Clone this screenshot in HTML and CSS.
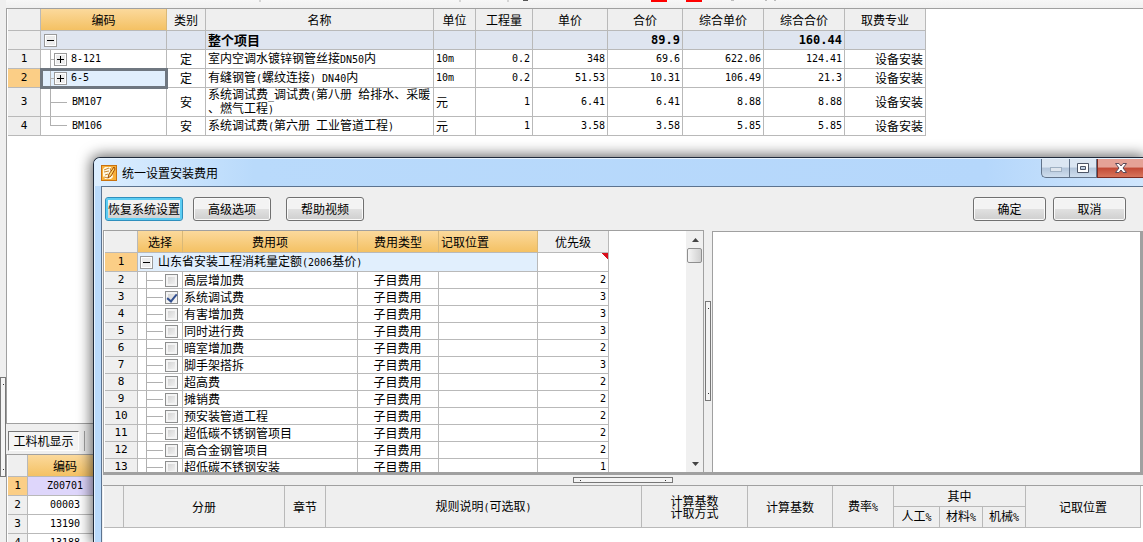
FILE: index.html
```html
<!DOCTYPE html>
<html lang="zh-CN">
<head>
<meta charset="utf-8">
<title>统一设置安装费用</title>
<link rel="stylesheet" href="styles.css">
</head>
<body>
<main class="app">
  <aside class="rail"><span class="grip grip-v"></span></aside>
  <div class="workspace">
    <div class="toolbar">
      <svg class="toolbar-marks" width="830" height="8" aria-hidden="true">
        <path d="M254 0v2M454 0v2M502 0v2" stroke="#b4b4b4"/>
        <rect x="517" y="0" width="5" height="1" fill="#555"/>
        <rect x="645" y="0" width="16" height="2" fill="#f00"/>
        <rect x="680" y="0" width="16" height="2" fill="#f00"/>
        <rect x="725" y="0" width="3" height="1" fill="#bbb"/>
        <rect x="759" y="0" width="2" height="1" fill="#bbb"/>
        <rect x="768" y="0" width="2" height="1" fill="#bbb"/>
      </svg>
    </div>
    <section class="panel budget">
      <table class="grid budget-grid">
        <colgroup><col class="w33"><col class="w126"><col class="w39"><col class="w228"><col class="w42"><col class="w57"><col class="w75"><col class="w75"><col class="w81"><col class="w81"><col class="w81"></colgroup>
        <thead>
          <tr><th></th><th class="hot">编码</th><th>类别</th><th>名称</th><th>单位</th><th>工程量</th><th>单价</th><th>合价</th><th>综合单价</th><th>综合合价</th><th>取费专业</th></tr>
        </thead>
        <tbody>
          <tr class="total"><th></th><td class="tree"><div class="node root"><button class="toggle" aria-label="折叠"></button></div></td><td></td><td>整个项目</td><td></td><td></td><td></td><td class="num">89.9</td><td></td><td class="num">160.44</td><td></td></tr>
          <tr><th>1</th><td class="tree"><div class="node"><i class="stem"></i><button class="toggle plus" aria-label="展开"></button><span class="en">8-121</span></div></td><td class="mid">定</td><td>室内空调水镀锌钢管丝接<span class="en">DN50</span>内</td><td class="en">10m</td><td class="num">0.2</td><td class="num">348</td><td class="num">69.6</td><td class="num">622.06</td><td class="num">124.41</td><td class="end">设备安装</td></tr>
          <tr><th class="hot-row">2</th><td class="tree current"><div class="node"><i class="stem"></i><button class="toggle plus" aria-label="展开"></button><span class="en">6-5</span></div></td><td class="mid">定</td><td>有缝钢管<span class="en">(</span>螺纹连接<span class="en">) DN40</span>内</td><td class="en">10m</td><td class="num">0.2</td><td class="num">51.53</td><td class="num">10.31</td><td class="num">106.49</td><td class="num">21.3</td><td class="end">设备安装</td></tr>
          <tr class="tall"><th>3</th><td class="tree"><div class="node"><i class="stem long"></i><span class="en">BM107</span></div></td><td class="mid">安</td><td class="wrap">系统调试费<span class="en">_</span>调试费<span class="en">(</span>第八册<span class="en"> </span>给排水、采暖<br>、燃气工程<span class="en">)</span></td><td>元</td><td class="num">1</td><td class="num">6.41</td><td class="num">6.41</td><td class="num">8.88</td><td class="num">8.88</td><td class="end">设备安装</td></tr>
          <tr><th>4</th><td class="tree"><div class="node"><i class="stem long last"></i><span class="en">BM106</span></div></td><td class="mid">安</td><td>系统调试费<span class="en">(</span>第六册<span class="en"> </span>工业管道工程<span class="en">)</span></td><td>元</td><td class="num">1</td><td class="num">3.58</td><td class="num">3.58</td><td class="num">5.85</td><td class="num">5.85</td><td class="end">设备安装</td></tr>
        </tbody>
      </table>
    </section>
    <div class="tabs"><button class="tab">工料机显示</button><span class="tab-rule"></span></div>
    <section class="panel resources">
      <table class="grid resource-grid">
        <colgroup><col class="w20"><col class="w75"></colgroup>
        <thead><tr><th></th><th class="hot">编码</th></tr></thead>
        <tbody>
          <tr><th class="hot-row">1</th><td class="mid en picked">Z00701</td></tr>
          <tr><th>2</th><td class="mid en">00003</td></tr>
          <tr><th>3</th><td class="mid en">13190</td></tr>
          <tr><th>4</th><td class="mid en">13188</td></tr>
        </tbody>
      </table>
    </section>
  </div>
</main>

<div class="dialog" role="dialog" aria-labelledby="dialog-title">
  <header class="titlebar">
    <svg class="app-icon" width="16" height="16" viewBox="0 0 16 16" aria-hidden="true">
      <rect x="0.5" y="0.5" width="15" height="15" fill="#f8b03a" stroke="#c9720f"/>
      <path d="M2 4l2-2h6l2 10-2 2H4l-2-3z" fill="#fff8e0"/>
      <path d="M3 5l5-2M3 7l5-1M4 10l3-1M3 12l4 1M9 3l1 3" stroke="#c98a35" fill="none"/>
      <path d="M13 2l-5 7-1 4 3-2 4-7z" fill="#ffd76a" stroke="#a04c05"/>
    </svg>
    <h1 class="dialog-title" id="dialog-title">统一设置安装费用</h1>
    <div class="window-buttons">
      <button class="win min" aria-label="最小化"><svg width="14" height="12"><rect x="1.5" y="5.5" width="11" height="4" fill="#dfe6ee" stroke="#9fb0c2"/></svg></button>
      <button class="win max" aria-label="最大化"><svg width="14" height="12"><path d="M1.500 1.500h11v9h-11zM4.500 4.500h5v3h-5z" fill="#fff" fill-rule="evenodd" stroke="#4c5566"/></svg></button>
      <button class="win close" aria-label="关闭"><svg width="14" height="12"><path d="M1.500 1.500h3.500l2 2.500 2-2.500h3.500l-3.500 4.500 3.500 4.500h-3.500l-2-2.500-2 2.500h-3.500l3.500-4.500z" fill="#fff" stroke="#5b4a58"/></svg></button>
    </div>
  </header>
  <div class="client">
    <div class="actions">
      <button class="btn focus">恢复系统设置</button>
      <button class="btn">高级选项</button>
      <button class="btn help">帮助视频</button>
      <button class="btn small ok">确定</button>
      <button class="btn small">取消</button>
    </div>
    <div class="split">
      <section class="fee-panel">
        <div class="fee-view">
          <table class="grid fee-grid">
            <colgroup><col class="w33"><col class="w45"><col class="w175"><col class="w81"><col class="w99"><col class="w71"></colgroup>
            <thead><tr><th></th><th class="hot">选择</th><th class="hot">费用项</th><th class="hot">费用类型</th><th class="hot start">记取位置</th><th>优先级</th></tr></thead>
            <tbody>
              <tr class="group"><th class="hot-row">1</th><td class="tree" colspan="4"><div class="node"><button class="toggle flat" aria-label="折叠"></button><span>山东省安装工程消耗量定额<span class="en">(2006</span>基价<span class="en">)</span></span></div></td><td class="flagged"></td></tr>
              <tr><th>2</th><td class="tree"><div class="node"><i class="stem"></i><input type="checkbox" id="f2"></div></td><td><label for="f2">高层增加费</label></td><td class="mid">子目费用</td><td></td><td class="num">2</td></tr>
              <tr><th>3</th><td class="tree"><div class="node"><i class="stem"></i><input type="checkbox" id="f3" checked></div></td><td><label for="f3">系统调试费</label></td><td class="mid">子目费用</td><td></td><td class="num">3</td></tr>
              <tr><th>4</th><td class="tree"><div class="node"><i class="stem"></i><input type="checkbox" id="f4"></div></td><td><label for="f4">有害增加费</label></td><td class="mid">子目费用</td><td></td><td class="num">3</td></tr>
              <tr><th>5</th><td class="tree"><div class="node"><i class="stem"></i><input type="checkbox" id="f5"></div></td><td><label for="f5">同时进行费</label></td><td class="mid">子目费用</td><td></td><td class="num">3</td></tr>
              <tr><th>6</th><td class="tree"><div class="node"><i class="stem"></i><input type="checkbox" id="f6"></div></td><td><label for="f6">暗室增加费</label></td><td class="mid">子目费用</td><td></td><td class="num">2</td></tr>
              <tr><th>7</th><td class="tree"><div class="node"><i class="stem"></i><input type="checkbox" id="f7"></div></td><td><label for="f7">脚手架搭拆</label></td><td class="mid">子目费用</td><td></td><td class="num">3</td></tr>
              <tr><th>8</th><td class="tree"><div class="node"><i class="stem"></i><input type="checkbox" id="f8"></div></td><td><label for="f8">超高费</label></td><td class="mid">子目费用</td><td></td><td class="num">2</td></tr>
              <tr><th>9</th><td class="tree"><div class="node"><i class="stem"></i><input type="checkbox" id="f9"></div></td><td><label for="f9">摊销费</label></td><td class="mid">子目费用</td><td></td><td class="num">2</td></tr>
              <tr><th>10</th><td class="tree"><div class="node"><i class="stem"></i><input type="checkbox" id="f10"></div></td><td><label for="f10">预安装管道工程</label></td><td class="mid">子目费用</td><td></td><td class="num">2</td></tr>
              <tr><th>11</th><td class="tree"><div class="node"><i class="stem"></i><input type="checkbox" id="f11"></div></td><td><label for="f11">超低碳不锈钢管项目</label></td><td class="mid">子目费用</td><td></td><td class="num">2</td></tr>
              <tr><th>12</th><td class="tree"><div class="node"><i class="stem"></i><input type="checkbox" id="f12"></div></td><td><label for="f12">高合金钢管项目</label></td><td class="mid">子目费用</td><td></td><td class="num">2</td></tr>
              <tr><th>13</th><td class="tree"><div class="node"><i class="stem"></i><input type="checkbox" id="f13"></div></td><td><label for="f13">超低碳不锈钢安装</label></td><td class="mid">子目费用</td><td></td><td class="num">1</td></tr>
            </tbody>
          </table>
        </div>
        <div class="scrollbar" aria-hidden="true">
          <svg width="16" height="16"><path d="M5 10h7l-3.500-4z" fill="#444"/></svg>
          <span class="thumb"></span>
          <svg class="down" width="16" height="16"><path d="M5 6h7l-3.500 4z" fill="#444"/></svg>
        </div>
      </section>
      <div class="gutter-v"><span class="grip grip-v"></span></div>
      <section class="detail-panel"></section>
    </div>
    <div class="gutter-h"><span class="grip grip-h"></span></div>
    <section class="rules">
      <table class="grid rule-grid">
        <colgroup><col class="w20"><col class="w161"><col class="w41"><col class="w316"><col class="w106"><col class="w85"><col class="w61"><col class="w46"><col class="w43"><col class="w43"><col></colgroup>
        <thead>
          <tr><th rowspan="2"></th><th rowspan="2">分册</th><th rowspan="2">章节</th><th rowspan="2">规则说明<span class="en">(</span>可选取<span class="en">)</span></th><th rowspan="2" class="wrap">计算基数<br>计取方式</th><th rowspan="2">计算基数</th><th rowspan="2">费率<span class="en">%</span></th><th colspan="3">其中</th><th rowspan="2">记取位置</th></tr>
          <tr><th>人工<span class="en">%</span></th><th>材料<span class="en">%</span></th><th>机械<span class="en">%</span></th></tr>
        </thead>
      </table>
    </section>
  </div>
</div>
</body>
</html>
```

FILE: styles.css
```css
* { box-sizing: border-box; }

html, body { height: 100%; }

body {
  margin: 0;
  overflow: hidden;
  position: relative;
  background: #efefef;
  color: #000;
  font: 12px/16px "Noto Sans CJK SC", sans-serif;
}

button, input { font: inherit; color: inherit; margin: 0; padding: 0; }

.en, .num, tbody th { font-family: "DejaVu Sans Mono", "Noto Sans CJK SC", monospace; font-size: 10px; }
tbody th { font-size: 11px; }

/* Main window */
.app { display: flex; height: 100%; }

.rail { width: 6px; flex: none; display: flex; justify-content: center; align-items: flex-start; padding-top: 377px; }

.grip { display: flex; justify-content: space-between; border: 1px solid #777; background: #f4f4f4; }
.grip::before, .grip::after { content: ""; width: 1px; height: 1px; background: #333; }
.grip-v { width: 6px; height: 100px; flex: none; flex-direction: column; align-items: center; padding: 6px 0; }
.grip-h { width: 100px; height: 6px; align-items: center; padding: 0 6px; }

.workspace { flex: 1; min-width: 0; display: flex; flex-direction: column; }
.toolbar { height: 8px; flex: none; background: linear-gradient(#f7f7f7, #f0f0f0); }
.toolbar-marks { display: block; }

.panel { background: #fff; border: 1px solid #a0a0a0; border-right: 0; padding-left: 1px; overflow: hidden; }
.budget { height: 416px; flex: none; }
.resources { flex: 1; min-height: 0; border-bottom: 0; }

.tabs { flex: none; height: 30px; display: flex; align-items: center; gap: 5px; padding: 4px 2px 0; }
.tab { width: 71px; height: 20px; border: 1px solid; border-color: #777 #fff #fff #777; background: #f4f4f4; line-height: 16px; }
.tab-rule { width: 1px; height: 20px; background: #a0a0a0; }

/* Grids */
.grid { border-collapse: separate; border-spacing: 0; table-layout: fixed; width: min-content; }
.grid th, .grid td {
  height: 19px;
  padding: 0 2px;
  border-right: 1px solid #b9b9b9;
  border-bottom: 1px solid #b9b9b9;
  font-weight: normal;
  text-align: left;
  line-height: 16px;
  white-space: nowrap;
}
.grid th { background: #efefef; text-align: center; }
.grid thead th { height: 22px; }
.grid .hot { background: linear-gradient(#fbd99c, #f4c163); border-right-color: #d9b877; }
.grid .hot-row { background: #fbce86; }
.grid .mid { text-align: center; }
.grid .num, .grid .end { text-align: right; }
.grid .start { text-align: left; }
.grid .wrap { line-height: 12px; }
.budget-grid .tall > * { height: 29px; }
.budget-grid .total td { background: #dfe5f0; font-weight: bold; font-size: 13px; }
.budget-grid .total .num { font-size: 12px; }
.grid .picked { background: #ded6fb; }
.grid .current { background: #e1effd; outline: 3px solid #6f7780; outline-offset: -2px; }
.grid .tree { padding: 0; height: 1px; }

.w20 { width: 20px; }
.w33 { width: 33px; }
.w39 { width: 39px; }
.w41 { width: 41px; }
.w42 { width: 42px; }
.w43 { width: 43px; }
.w45 { width: 45px; }
.w46 { width: 46px; }
.w57 { width: 57px; }
.w61 { width: 61px; }
.w71 { width: 71px; }
.w75 { width: 75px; }
.w81 { width: 81px; }
.w85 { width: 85px; }
.w99 { width: 99px; }
.w106 { width: 106px; }
.w126 { width: 126px; }
.w161 { width: 161px; }
.w175 { width: 175px; }
.w228 { width: 228px; }
.w316 { width: 316px; }

/* Tree cells */
.node { display: flex; align-items: center; height: 18px; padding-left: 9px; }
.budget-grid .root { padding-left: 3px; }
.tall .node { height: 28px; }
.stem { align-self: stretch; width: 4px; border-left: 1px solid #b0b0b0; background: linear-gradient(#b0b0b0, #b0b0b0) center / 100% 1px no-repeat; }
.stem.long { width: 17px; margin-right: 5px; }
.stem.last { height: 50%; background-position: bottom; align-self: flex-start; }
.toggle {
  width: 13px;
  height: 13px;
  flex: none;
  border: 1px solid #9a9a9a;
  box-shadow: inset 0 0 0 1px #fff;
  background: linear-gradient(#000, #000) center / 7px 1px no-repeat, #ececec;
}
.toggle.plus {
  margin-right: 4px;
  background: linear-gradient(#000, #000) center / 7px 1px no-repeat, linear-gradient(#000, #000) center / 1px 7px no-repeat, #ececec;
}

/* Dialog */
.dialog {
  position: absolute;
  left: 93px;
  top: 157px;
  right: 0;
  bottom: 0;
  display: flex;
  flex-direction: column;
  border: solid #1f2a3a;
  border-width: 1px 0 0 1px;
  border-radius: 7px 0 0 0;
  background: #b9dafb;
  box-shadow: 0 0 14px 2px rgba(0, 0, 0, 0.6), inset 1px 1px 0 #e6f3ff;
}
.titlebar { height: 28px; flex: none; display: flex; align-items: center; gap: 5px; padding-left: 7px; border-radius: 6px 0 0 0; border-top: 1px solid #e6f3ff; background: linear-gradient(90deg, #dceeff, #b9dafb 160px, #b5d7fb 85%, #d0e6fd); }
.dialog-title { margin: 0; flex: 1; font-size: 12px; font-weight: normal; line-height: 16px; }
.window-buttons { display: flex; align-self: flex-start; }
.win { height: 19px; width: 28px; display: flex; align-items: center; justify-content: center; border: 1px solid #61738a; border-top: 0; background: linear-gradient(#dbe6f2 45%, #b3c5da 50%, #cfdeee); }
.win.min { border-radius: 0 0 0 5px; border-right: 0; }
.win.close { width: 46px; border-color: #7a2a22; border-right: 0; background: linear-gradient(#e5a296 45%, #c24a36 50%, #d8755c); }

.client { flex: 1; min-height: 0; margin-left: 7px; display: flex; flex-direction: column; border: solid #5c738f; border-width: 1px 0 0 1px; background: #efefef; padding-left: 1px; }
.actions { height: 43px; flex: none; display: flex; align-items: flex-start; gap: 7px; padding: 10px 17px 0 2px; }
.btn { width: 78px; height: 24px; border: 1px solid #707070; border-radius: 3px; background: linear-gradient(#f3f3f3 48%, #e0e0e0 52%, #cfcfcf); box-shadow: inset 0 0 0 1px #fafafa; line-height: 20px; white-space: nowrap; }
.btn.focus { border-color: #2f8fbd; box-shadow: inset 0 0 0 2px #5ccdf2; margin-right: 3px; }
.btn.help { margin-left: 8px; }
.btn.small { width: 73px; }
.btn.ok { margin-left: auto; }

.split { height: 245px; flex: none; display: flex; border-bottom: 3px solid #a0a0a0; }
.fee-panel { width: 601px; flex: none; display: flex; justify-content: space-between; padding-left: 1px; border: solid #a0a0a0; border-width: 1px 1px 0 1px; background: #fff; overflow: hidden; }
.fee-grid tbody tr:not(.group) > * { height: 17px; line-height: 14px; }
.fee-grid tbody td { padding-left: 1px; }
.fee-grid .tree .node { height: 16px; padding-left: 8px; }
.fee-grid .group .tree { background: #e1effd; }
.fee-grid .group .node { height: 18px; padding-left: 2px; gap: 5px; }
.fee-grid .stem { width: 17px; margin-right: 2px; }
.grid .flagged { background: linear-gradient(45deg, #fff 50%, #d8101c 50%) top right / 6px 6px no-repeat; }
input[type="checkbox"] { appearance: none; width: 13px; height: 13px; border: 1px solid #8e8f8f; background: linear-gradient(135deg, #cdcdcd, #f8f8f8); box-shadow: inset 0 0 0 2px #f4f4f4; display: grid; place-items: center; }
input[type="checkbox"]:checked::before { content: ""; width: 4px; height: 8px; border: solid #33508f; border-width: 0 2px 2px 0; transform: rotate(40deg); }

.scrollbar { width: 17px; display: flex; flex-direction: column; align-items: center; background: #f0f0f0; padding-top: 1px; }
.thumb { width: 15px; height: 15px; border: 1px solid #8f8f8f; border-radius: 2px; background: linear-gradient(90deg, #f5f5f5, #cfcfcf); }
.down { margin-top: auto; }

.gutter-v { width: 8px; flex: none; display: flex; justify-content: center; align-items: center; }
.detail-panel { flex: 1; margin-top: 1px; border: solid #a0a0a0; border-width: 1px 3px 0 1px; background: #fff; }
.gutter-h { height: 10px; flex: none; display: flex; justify-content: center; align-items: center; }

.rules { flex: 1; min-height: 0; border-top: 1px solid #a0a0a0; background: #fff; padding: 0 2px 0 1px; }
.rule-grid { width: 100%; }
.rule-grid thead th { height: 21px; padding: 0; }
```
